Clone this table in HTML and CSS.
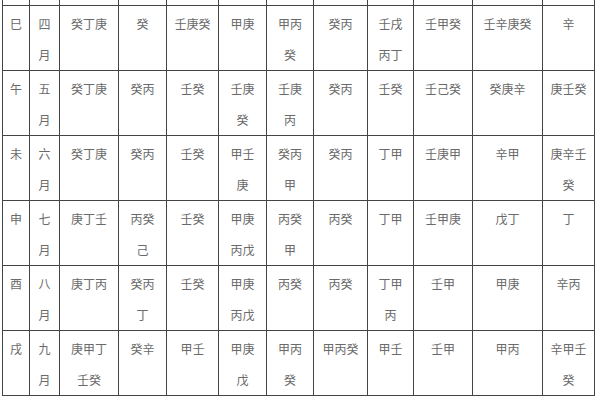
FILE: index.html
```html
<!DOCTYPE html>
<html lang="zh">
<head>
<meta charset="utf-8">
<link rel="stylesheet" href="styles.css">
</head>
<body>
<table class="grid">
  <colgroup>
    <col class="c1"><col class="c2"><col class="c3"><col class="c4"><col class="c5"><col class="c6">
    <col class="c7"><col class="c8"><col class="c9"><col class="c10"><col class="c11"><col class="c12">
  </colgroup>
  <tr class="cut"><td></td><td></td><td></td><td></td><td></td><td></td><td></td><td></td><td></td><td></td><td></td><td></td></tr>
  <tr><td>巳</td><td>四月</td><td>癸丁庚</td><td>癸</td><td>壬庚癸</td><td>甲庚</td><td>甲丙癸</td><td>癸丙</td><td>壬戌丙丁</td><td>壬甲癸</td><td>壬辛庚癸</td><td>辛</td></tr>
  <tr><td>午</td><td>五月</td><td>癸丁庚</td><td>癸丙</td><td>壬癸</td><td>壬庚癸</td><td>壬庚丙</td><td>癸丙</td><td>壬癸</td><td>壬己癸</td><td>癸庚辛</td><td>庚壬癸</td></tr>
  <tr><td>未</td><td>六月</td><td>癸丁庚</td><td>癸丙</td><td>壬癸</td><td>甲壬庚</td><td>癸丙甲</td><td>癸丙</td><td>丁甲</td><td>壬庚甲</td><td>辛甲</td><td>庚辛壬癸</td></tr>
  <tr><td>申</td><td>七月</td><td>庚丁壬</td><td>丙癸己</td><td>壬癸</td><td>甲庚丙戊</td><td>丙癸甲</td><td>丙癸</td><td>丁甲</td><td>壬甲庚</td><td>戊丁</td><td>丁</td></tr>
  <tr><td>酉</td><td>八月</td><td>庚丁丙</td><td>癸丙丁</td><td>壬癸</td><td>甲庚丙戊</td><td>丙癸</td><td>丙癸</td><td>丁甲丙</td><td>壬甲</td><td>甲庚</td><td>辛丙</td></tr>
  <tr><td>戌</td><td>九月</td><td>庚甲丁壬癸</td><td>癸辛</td><td>甲壬</td><td>甲庚戊</td><td>甲丙癸</td><td>甲丙癸</td><td>甲壬</td><td>壬甲</td><td>甲丙</td><td>辛甲壬癸</td></tr>
</table>
</body>
</html>
```
FILE: styles.css
```css
html, body {
  margin: 0;
  padding: 0;
  background: #ffffff;
}
body {
  padding-left: 2px;
  overflow: hidden;
}
.grid {
  border-collapse: collapse;
  table-layout: fixed;
  width: 593px;
  font-family: "Noto Sans CJK SC", "Noto Sans CJK TC", sans-serif;
  font-size: 12px;
  color: #6a6a6a;
}
.grid td {
  border: 1px solid #444;
  height: 64px;
  padding: 2px 7px 0 7px;
  line-height: 31px;
  text-align: center;
  vertical-align: top;
  box-sizing: border-box;
  word-break: break-all;
}
.grid tr.cut td {
  height: 5px;
  padding: 0;
  border-top: none;
}
.c1 { width: 27px; }
.c2 { width: 30px; }
.c3 { width: 59px; }
.c4 { width: 48px; }
.c5 { width: 52px; }
.c6 { width: 48px; }
.c7 { width: 47px; }
.c8 { width: 54px; }
.c9 { width: 46px; }
.c10 { width: 59px; }
.c11 { width: 70px; }
.c12 { width: 52px; }
```
